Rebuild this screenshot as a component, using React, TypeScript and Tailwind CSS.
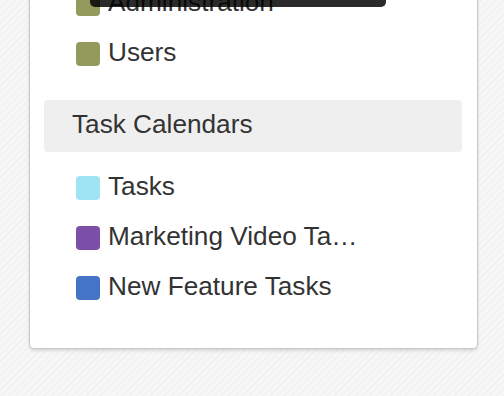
const calendars = [
  { name: "Administration", color: "#939b5c" },
  { name: "Users", color: "#939b5c" },
];

const taskCalendars = [
  { name: "Tasks", color: "#9fe4f3" },
  { name: "Marketing Video Tasks", color: "#7b4fa8" },
  { name: "New Feature Tasks", color: "#4474c6" },
];

function Row({ name, color }: { name: string; color: string }) {
  return (
    <div className="flex h-[50px] items-center gap-2 pl-[46px]">
      <span
        className="h-6 w-6 shrink-0 rounded-[4px]"
        style={{ backgroundColor: color }}
      />
      <span className="max-w-[258px] truncate pb-[2px]">{name}</span>
    </div>
  );
}

export default function App() {
  return (
    <div className="h-[396px] w-[504px] overflow-hidden bg-[#f4f4f4] bg-[repeating-linear-gradient(135deg,#f2f2f2_0px,#f2f2f2_2px,#f7f7f7_2px,#f7f7f7_5px)] font-['Liberation_Sans',Arial,sans-serif] text-[26.2px] text-[#333]">
      <div className="relative ml-[29px] -mt-[21px] w-[449px] rounded-b-[5px] border border-t-0 border-[#c9c9c9] bg-white pb-[35px] shadow-[0_2px_3px_rgba(0,0,0,0.12)]">
        {calendars.map((c) => (
          <Row key={c.name} {...c} />
        ))}

        {/* tooltip overlapping the first row */}
        <div className="absolute left-[60px] top-0 h-[28px] w-[296px] rounded-b-[5px] bg-[rgba(0,0,0,0.83)]" />

        <div className="ml-[14px] mr-[15px] mt-[21px] mb-[11px] flex h-[52px] items-center rounded-[4px] bg-[#efefef] pb-[2px] pl-[28px]">
          Task Calendars
        </div>

        {taskCalendars.map((c) => (
          <Row key={c.name} {...c} />
        ))}
      </div>
    </div>
  );
}
